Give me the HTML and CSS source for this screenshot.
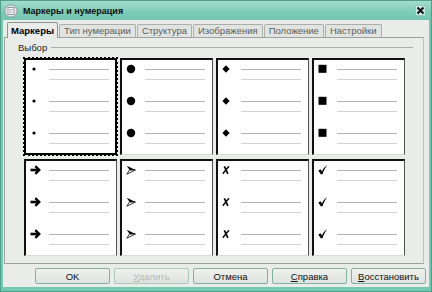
FILE: index.html
```html
<!DOCTYPE html>
<html lang="ru">
<head>
    <meta charset="UTF-8">
    <title>Маркеры и нумерация</title>
    <link rel="stylesheet" href="styles.css">
</head>
<body>
    <div class="window">
        <!-- Заголовок окна -->
        <div class="titlebar">
            <svg class="app-icon" width="14" height="14" viewBox="0 0 14 14">
                <circle cx="7" cy="7" r="6.2" fill="#e6e8ea" stroke="#8a96a4" stroke-width="1"/>
                <rect x="4" y="3.5" width="6" height="7" fill="#fff" stroke="#7a8694" stroke-width="0.8"/>
                <path d="M5 5.5h4M5 7h4M5 8.5h3" stroke="#9aa4b0" stroke-width="0.7"/>
            </svg>
            <span class="title">Маркеры и нумерация</span>
            <span class="close">
                <svg width="9" height="9" viewBox="0 0 9 9">
                    <path d="M1.5 1.5l6 6M7.5 1.5l-6 6" stroke="#111" stroke-width="2"/>
                </svg>
            </span>
        </div>

        <div class="client">
            <!-- Вкладки -->
            <div class="tabs">
                <span class="tab active">Маркеры</span>
                <span class="tab">Тип нумерации</span>
                <span class="tab">Структура</span>
                <span class="tab">Изображения</span>
                <span class="tab">Положение</span>
                <span class="tab">Настройки</span>
            </div>

            <div class="panel">
                <div class="group">
                    <span class="legend">Выбор</span>
                    <span class="rule"></span>
                </div>
                <div class="grid" id="grid"></div>
            </div>

            <!-- Кнопки -->
            <div class="buttons">
                <button>OK</button>
                <button disabled><u>У</u>далить</button>
                <button>Отмена</button>
                <button><u>С</u>правка</button>
                <button><u>В</u>осстановить</button>
            </div>
        </div>
    </div>

    <script>
        var marks = [
            '<svg width="12" height="10" viewBox="0 0 12 10"><circle cx="4" cy="5" r="1.6" fill="#000"/></svg>',
            '<svg width="12" height="10" viewBox="0 0 12 10"><circle cx="5" cy="5" r="4.2" fill="#000"/></svg>',
            '<svg width="12" height="10" viewBox="0 0 12 10"><path d="M4 1.2L7.6 5 4 8.8 0.4 5z" fill="#000"/></svg>',
            '<svg width="12" height="10" viewBox="0 0 12 10"><rect x="0.5" y="0.8" width="8" height="8" fill="#000"/></svg>',
            '<svg width="12" height="10" viewBox="0 0 12 10"><path d="M0.5 5h8" stroke="#000" stroke-width="2.6"/><path d="M5.3 1.2L9.2 5 5.3 8.8" fill="none" stroke="#000" stroke-width="2.4"/></svg>',
            '<svg width="12" height="10" viewBox="0 0 12 10"><path d="M0.8 0.8L9.5 5 3.5 5z" fill="#000"/><path d="M0.8 9.2L9.5 5 3.5 5z" fill="#fff" stroke="#000" stroke-width="0.8"/></svg>',
            '<svg width="12" height="10" viewBox="0 0 12 10"><path d="M2.3 1.3C3.8 4 4.8 6.5 5.8 8.8" fill="none" stroke="#000" stroke-width="1.7"/><path d="M7 1.2C4.6 3.8 2.6 6.5 0.8 8.8" fill="none" stroke="#000" stroke-width="1.4"/></svg>',
            '<svg width="12" height="10" viewBox="0 0 12 10"><path d="M0.3 5.6L2.6 4.2 3.8 6.4C5.2 3.6 7 1.6 9.2 0.3 7.4 2.6 5.6 5.6 4.6 9.3L2.8 9.3z" fill="#000"/></svg>'
        ];

        var grid = document.getElementById("grid");
        marks.forEach(function(mark, i) {
            var cell = document.createElement("div");
            cell.className = i === 0 ? "cell selected" : "cell";
            for (var n = 0; n < 3; n++) {
                cell.innerHTML += '<div class="item"><span class="mark">' + mark +
                    '</span><span class="lines"><i></i><i></i></span></div>';
            }
            grid.appendChild(cell);
        });
    </script>
</body>
</html>
```

FILE: styles.css
```css
/* Сброс */
* {
    margin: 0;
    padding: 0;
    box-sizing: border-box;
}

body {
    width: 432px;
    height: 292px;
    overflow: hidden;
    font-family: 'Liberation Sans', sans-serif;
    font-size: 9.5px;
    color: #111;
    background: #6cc4ac;
}

/* Окно */
.window {
    width: 432px;
    height: 292px;
    display: flex;
    flex-direction: column;
    background: #74c9b2;
    border: 1px solid #4f9f8a;
}

.titlebar {
    height: 19px;
    display: flex;
    align-items: center;
    padding: 0 3px;
    background: linear-gradient(#a4ddcd, #7ccbb6 60%, #74c6b0);
}

.app-icon {
    margin-right: 5px;
}

.title {
    font-weight: bold;
    font-size: 9px;
    flex: 1;
}

.close {
    width: 11px;
    height: 11px;
    display: flex;
    align-items: center;
    justify-content: center;
    background: #c8ebe1;
    border: 1px solid #8fcab9;
    margin-right: 2px;
}

.client {
    flex: 1;
    margin: 0 2px 4px 2px;
    background: #eaecea;
    display: flex;
    flex-direction: column;
}

/* Вкладки */
.tabs {
    display: flex;
    align-items: flex-end;
    height: 16px;
    margin-top: 1px;
    padding-left: 4px;
    white-space: nowrap;
}

.tab {
    height: 13px;
    line-height: 12px;
    padding: 0 4px;
    color: #5a5f5a;
    background: #e2e4e2;
    border: 1px solid #a9b0a9;
    border-bottom: none;
    border-radius: 2px 2px 0 0;
    margin-right: 1px;
}

.tab.active {
    height: 16px;
    line-height: 15px;
    padding: 0 3px;
    color: #000;
    font-weight: bold;
    background: #eaecea;
    border-color: #8e968e;
    margin-bottom: -1px;
    position: relative;
    z-index: 1;
}

.panel {
    height: 227px;
    width: 420px;
    margin-left: 1px;
    border: 1px solid #9ca39c;
    border-right-color: #bcc2bc;
    padding-top: 4px;
}

.group {
    display: flex;
    align-items: center;
    height: 11px;
    padding-left: 13px;
}

.legend {
    color: #222;
    margin-right: 4px;
}

.rule {
    width: 362px;
    border-top: 1px solid #a8aea8;
}

/* Сетка маркеров */
.grid {
    margin: 5px 0 0 19px;
    display: grid;
    grid-template-columns: repeat(4, 93px);
    grid-template-rows: repeat(2, 97px);
    column-gap: 3px;
    row-gap: 4px;
}

.cell {
    background: #fff;
    border-top: 2px solid #111;
    border-left: 2px solid #111;
    border-right: 1px solid #555;
    border-bottom: 1px solid #d8dcd8;
    padding: 4px 0 0 4px;
}

.cell.selected {
    border: 2px solid #000;
    outline: 2px dotted #000;
    outline-offset: -1px;
}

.item {
    height: 32px;
    display: flex;
}

.mark {
    width: 19px;
    height: 10px;
    display: flex;
    align-items: center;
}

.lines {
    width: 60px;
    padding-top: 5px;
}

.lines i {
    display: block;
    height: 10px;
    border-top: 1px solid #b4b4b8;
}

.lines i + i {
    border-top-color: #d2d2d6;
}

/* Кнопки */
.buttons {
    display: flex;
    justify-content: flex-end;
    gap: 4px;
    padding: 4px 3px 0 0;
}

button {
    width: 75px;
    height: 16px;
    font-family: 'Liberation Sans', sans-serif;
    font-size: 9.5px;
    color: #111;
    background: linear-gradient(#eef1ee, #dfe3df);
    border: 1px solid #82b0a2;
    border-radius: 2px;
}

button:disabled {
    color: #b3bab3;
    border-color: #a9c8bd;
}
```
